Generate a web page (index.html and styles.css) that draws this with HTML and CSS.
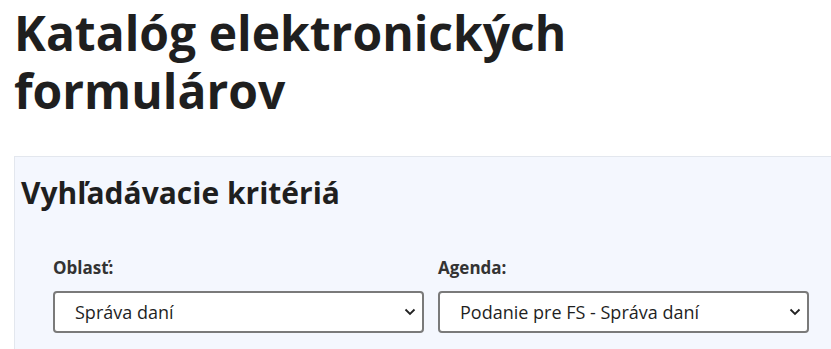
FILE: index.html
```html
<!DOCTYPE html>
<html lang="sk">
<head>
<meta charset="utf-8">
<title>Katalóg elektronických formulárov</title>
<link rel="stylesheet" href="styles.css">
</head>
<body>
<main class="page">
  <h1 class="page-title">Katalóg elektronických formulárov</h1>
  <section class="criteria">
    <h2 class="criteria-title">Vyhľadávacie kritériá</h2>
    <div class="fields">
      <div class="field">
        <label class="field-label" for="oblast">Oblasť:</label>
        <div class="select-wrap">
          <select id="oblast" class="select">
            <option>Správa daní</option>
          </select>
          <svg class="chev" viewBox="0 0 12 8" width="12" height="8"><path d="M1.5 1.5 6 6l4.5-4.5" fill="none" stroke="#222" stroke-width="1.8"/></svg>
        </div>
      </div>
      <div class="field">
        <label class="field-label" for="agenda">Agenda:</label>
        <div class="select-wrap">
          <select id="agenda" class="select">
            <option>Podanie pre FS - Správa daní</option>
          </select>
          <svg class="chev" viewBox="0 0 12 8" width="12" height="8"><path d="M1.5 1.5 6 6l4.5-4.5" fill="none" stroke="#222" stroke-width="1.8"/></svg>
        </div>
      </div>
    </div>
  </section>
</main>
</body>
</html>
```
FILE: styles.css
```css
html, body {
  margin: 0;
  padding: 0;
  background: #ffffff;
  overflow: hidden;
}
body {
  font-family: "Open Sans", "Noto Sans", sans-serif;
  color: #1f1f1f;
}
.page {
  padding: 0 0 0 14px;
}
.page-title {
  margin: 0;
  padding: 4px 0 0 0;
  font-size: 48px;
  line-height: 58px;
  font-weight: 700;
  color: #1f1f1f;
  width: 620px;
}
.criteria {
  margin-top: 36px;
  width: 833px;
  background: #f4f7fe;
  border: 1px solid #e3e7ee;
  border-bottom: none;
  padding: 17px 39px 20px 6px;
  box-sizing: border-box;
}
.criteria-title {
  margin: 0;
  font-size: 30px;
  line-height: 38px;
  font-weight: 700;
  color: #1f1f1f;
}
.fields {
  margin-top: 45px;
  padding-left: 32px;
  display: grid;
  grid-template-columns: 371px 371px;
  column-gap: 14px;
}
.field {
  display: flex;
  flex-direction: column;
}
.field-label {
  font-size: 17px;
  line-height: 22px;
  font-weight: 700;
  color: #333;
  margin-bottom: 12px;
}
.select-wrap {
  position: relative;
}
.select {
  appearance: none;
  -webkit-appearance: none;
  display: block;
  width: 100%;
  height: 42px;
  box-sizing: border-box;
  border: 2px solid #7a7a7a;
  border-radius: 4px;
  background: #fff;
  font-family: "Open Sans", "Noto Sans", sans-serif;
  font-size: 18px;
  color: #1f1f1f;
  padding: 0 0 0 20px;
}
.chev {
  position: absolute;
  right: 8px;
  top: 17px;
  pointer-events: none;
}
```
